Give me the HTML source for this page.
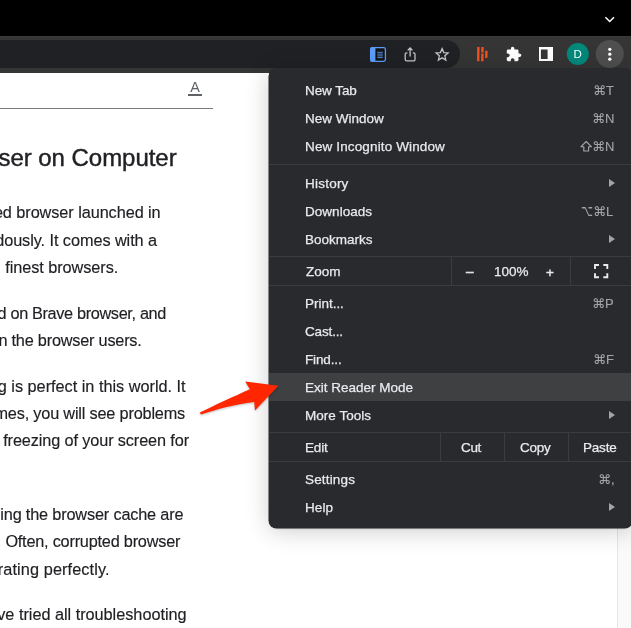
<!DOCTYPE html>
<html><head><meta charset="utf-8">
<style>
html,body{margin:0;padding:0;}
body{width:631px;height:628px;overflow:hidden;background:#fff;position:relative;font-family:"Liberation Sans",sans-serif;}
.abs{position:absolute;}
.mi,.sc,.ln,.h{will-change:transform;}
#top{left:0;top:0;width:631px;height:36px;background:#000;}
#tb{left:0;top:36px;width:631px;height:37px;background:#353535;border-top:1px solid #3a3a3a;box-sizing:border-box;}
#url{left:-30px;top:40px;width:490px;height:28px;border-radius:14px;background:#202124;}
#page{left:0;top:73px;width:631px;height:555px;background:#fff;overflow:hidden;}
#sb{left:617px;top:73px;width:14px;height:555px;background:#fafafa;border-left:1px solid #e6e6e6;box-sizing:border-box;}
.ln{position:absolute;white-space:nowrap;color:#202124;-webkit-text-stroke:0.15px #202124;font-size:16.3px;line-height:20px;text-align:right;left:-100px;}
.h{position:absolute;white-space:nowrap;color:#202124;-webkit-text-stroke:0.4px #202124;font-size:24px;line-height:30px;text-align:right;left:-100px;}
#menu{left:269px;top:68px;width:364px;height:460px;background:#292a2d;border-radius:8px;box-shadow:-0.5px 0.5px 0 0 #292a2d,0 3px 24px rgba(0,0,0,.2),0 1px 2px rgba(0,0,0,.14);color:#e8eaed;font-size:13.5px;}
.mi{position:absolute;left:36px;white-space:nowrap;line-height:16px;-webkit-text-stroke:0.25px #e8eaed;}
.sc{position:absolute;white-space:nowrap;line-height:16px;color:#a2a4a7;-webkit-text-stroke:0.12px #a2a4a7;text-align:right;right:19.5px;font-family:"Liberation Sans","DejaVu Sans",sans-serif;font-size:13px;}
.sep{position:absolute;left:0;width:365px;height:1px;background:#3b3c3f;}
.vsep{position:absolute;width:1px;background:#3b3c3f;}
.tri{position:absolute;left:340px;width:0;height:0;border-left:6px solid #a4a4a4;border-top:4px solid transparent;border-bottom:4px solid transparent;}
#hl{position:absolute;left:0;top:305px;width:365px;height:28px;background:#3f4042;}
</style></head><body>
<div id="page" class="abs"></div>
<div id="sb" class="abs"></div>

<!-- page content -->
<div class="abs" style="left:0;top:108px;width:212.5px;height:1px;background:#7a7a7a;"></div>
<div class="abs" style="left:185px;top:78px;width:20px;font-size:14.4px;line-height:18px;text-align:center;color:#5f6368;will-change:transform;">A</div>
<div class="abs" style="left:187.7px;top:93.6px;width:14px;height:2.1px;background:#5f6368;"></div>

<!--LINES-->
<div class="h" style="top:143px;width:276.6px;letter-spacing:-0.040px;">ser on Computer</div>
<div class="ln" style="top:202px;width:260.6px;letter-spacing:-0.075px;">ed browser launched in</div>
<div class="ln" style="top:230px;width:257.0px;letter-spacing:-0.072px;">dously. It comes with a</div>
<div class="ln" style="top:257px;width:218.2px;letter-spacing:-0.066px;">finest browsers.</div>
<div class="ln" style="top:303px;width:266.0px;letter-spacing:-0.351px;">d on Brave browser, and</div>
<div class="ln" style="top:330px;width:241.6px;letter-spacing:-0.216px;">n the browser users.</div>
<div class="ln" style="top:376px;width:285.6px;letter-spacing:-0.013px;">g is perfect in this world. It</div>
<div class="ln" style="top:403px;width:285.0px;letter-spacing:-0.190px;">mes, you will see problems</div>
<div class="ln" style="top:430px;width:289.0px;letter-spacing:-0.124px;">freezing of your screen for</div>
<div class="ln" style="top:504px;width:283.4px;letter-spacing:-0.170px;">ing the browser cache are</div>
<div class="ln" style="top:531px;width:280.2px;letter-spacing:-0.220px;">Often, corrupted browser</div>
<div class="ln" style="top:559px;width:209.6px;letter-spacing:0.100px;">rating perfectly.</div>
<div class="ln" style="top:604px;width:286.6px;letter-spacing:-0.026px;">ve tried all troubleshooting</div>
<!--/LINES-->

<!-- chrome -->
<div id="top" class="abs"></div>
<div id="tb" class="abs"></div>
<div id="url" class="abs"></div>

<svg class="abs" style="left:0;top:0" width="631" height="80" viewBox="0 0 631 80">
  <!-- chevron -->
  <path d="M605.4 17.2 L609.7 21.5 L614 17.2" fill="none" stroke="#fff" stroke-width="1.5"/>
  <!-- reader icon -->
  <rect x="370.6" y="47.6" width="14.8" height="13.8" rx="1.8" fill="#131416" stroke="#5c9cf8" stroke-width="1.3"/>
  <path d="M370 49.5 a2.5 2.5 0 0 1 2.5 -2.500 H375.4 V62 H372.5 a2.5 2.5 0 0 1 -2.5 -2.500 Z" fill="#5c9cf8"/>
  <path d="M377.300 52.300h5.500M377.300 54.100h5.500M377.300 55.900h5.500M377.300 57.600h5.500" stroke="#5c9cf8" stroke-width="0.850"/>
  <!-- share -->
  <path d="M407.400 52.900H406.600a1.400 1.400 0 0 0 -1.400 1.400V59.500a1.400 1.400 0 0 0 1.400 1.400H413.600a1.400 1.400 0 0 0 1.400 -1.400V54.300a1.400 1.400 0 0 0 -1.400 -1.400H412.800" fill="none" stroke="#c4c7c5" stroke-width="1.300"/>
  <path d="M410.100 56.400V48.200M407.700 50.400L410.100 48L412.500 50.400" fill="none" stroke="#c4c7c5" stroke-width="1.300"/>
  <!-- star -->
  <path d="M442.1 48.6l1.69 4.00 4.34 0.37 -3.29 2.85 0.99 4.24 -3.72 -2.24 -3.72 2.24 0.99 -4.24 -3.29 -2.85 4.34 -0.37z" fill="none" stroke="#c4c7c5" stroke-width="1.3" stroke-linejoin="miter"/>
  <!-- orange ext -->
  <path d="M477.200 47h2.400l-.2 14.300h-2.400zM481.300 47.100h2.400l-.1 5.300h-2.400zM481.200 53.500h2.400l-.1 7.800h-2.400zM485.200 50.800h2.400l-.1 7.200h-2.400z" fill="#f4511e"/>
  <!-- puzzle -->
  <g transform="translate(505.400 46) scale(0.690)"><path d="M20.500 11H19V7c0-1.100-.9-2-2-2h-4V3.500C13 2.120 11.880 1 10.500 1S8 2.120 8 3.500V5H4c-1.100 0-1.990.9-1.990 2v3.800H3.500c1.490 0 2.700 1.210 2.700 2.700s-1.210 2.700-2.700 2.700H2V20c0 1.100.9 2 2 2h3.800v-1.500c0-1.490 1.210-2.700 2.700-2.700 1.490 0 2.700 1.210 2.700 2.700V22H17c1.100 0 2-.9 2-2v-4h1.500c1.380 0 2.500-1.120 2.500-2.500S21.880 11 20.500 11z" fill="#fff"/></g>
  <!-- side panel -->
  <path d="M539 47.100H553V61.100H539Z M540.900 49.500V58.900H547.600V49.500Z" fill="#fff" fill-rule="evenodd"/>
  <!-- avatar -->
  <circle cx="577.800" cy="54" r="11" fill="#00897b"/>
  <!-- menu btn -->
  <circle cx="609.800" cy="54" r="14" fill="#4f4f4f"/>
  <circle cx="609.800" cy="49.300" r="1.650" fill="#fff"/><circle cx="609.800" cy="54.200" r="1.650" fill="#fff"/><circle cx="609.800" cy="59.200" r="1.650" fill="#fff"/>
  <text x="577.700" y="58.400" font-family="Liberation Sans, sans-serif" font-size="11.500" fill="#fff" text-anchor="middle">D</text>
</svg>


<!--MENU-->
<div id="menu" class="abs">
  <div id="hl"></div>
  <div class="mi" style="left:36.0px;top:15px;letter-spacing:-0.077px">New Tab</div>
  <div class="mi" style="left:36.0px;top:43px;letter-spacing:0.006px">New Window</div>
  <div class="mi" style="left:36.0px;top:71px;letter-spacing:0.134px">New Incognito Window</div>
  <div class="mi" style="left:36.0px;top:108px;letter-spacing:0.224px">History</div>
  <div class="mi" style="left:36.0px;top:136px;letter-spacing:0.035px">Downloads</div>
  <div class="mi" style="left:36.0px;top:164px;letter-spacing:0.005px">Bookmarks</div>
  <div class="mi" style="left:37px;top:196px;letter-spacing:-0.033px">Zoom</div>
  <div class="mi" style="left:36.0px;top:228px;letter-spacing:-0.020px">Print...</div>
  <div class="mi" style="left:36px;top:256px;letter-spacing:-0.150px">Cast...</div>
  <div class="mi" style="left:36.0px;top:284px;letter-spacing:-0.142px">Find...</div>
  <div class="mi" style="left:36.0px;top:312px;letter-spacing:-0.010px">Exit Reader Mode</div>
  <div class="mi" style="left:36.0px;top:340px;letter-spacing:0.031px">More Tools</div>
  <div class="mi" style="left:36.0px;top:372px;letter-spacing:-0.190px">Edit</div>
  <div class="mi" style="left:36.0px;top:404px;letter-spacing:0.168px">Settings</div>
  <div class="mi" style="left:36.0px;top:432px;letter-spacing:0.072px">Help</div>
  <div class="mi" style="left:225px;top:196px;letter-spacing:0.033px">100%</div>
  <div class="mi" style="left:191.7px;top:372px;letter-spacing:-0.327px">Cut</div>
  <div class="mi" style="left:250.7px;top:372px;letter-spacing:-0.288px">Copy</div>
  <div class="mi" style="left:314px;top:372px;letter-spacing:-0.200px">Paste</div>
  <div class="mi" style="left:197px;top:196px;-webkit-text-stroke:0.4px #e8eaed">–</div>
  <div class="mi" style="left:276.5px;top:197px;-webkit-text-stroke:0.4px #e8eaed">+</div>

  <div class="sc" style="top:15px">⌘T</div>
  <div class="sc" style="top:43px;right:18.8px">⌘N</div>
  <div class="sc" style="top:71px;right:18.8px">⌘N</div>
  <svg class="abs" style="left:311px;top:72px" width="14" height="12" viewBox="580 140 14 12"><path d="M586.200 141.500 L591.400 146.700 H588.600 V151 H583.800 V146.700 H581 Z" fill="none" stroke="#a2a4a7" stroke-width="1.150" stroke-linejoin="round"/></svg>
  <div class="sc" style="top:136px"><span style="display:inline-block;transform:scale(0.78,1.18);transform-origin:right 60%">⌥</span>⌘L</div>
  <div class="sc" style="top:228px;right:18.9px">⌘P</div>
  <div class="sc" style="top:284px;right:18.9px">⌘F</div>
  <div class="sc" style="top:404px;right:18.5px">⌘,</div>

  <div class="tri" style="top:111px"></div>
  <div class="tri" style="top:167px"></div>
  <div class="tri" style="top:343px"></div>
  <div class="tri" style="top:435px"></div>

  <div class="sep" style="top:96px"></div>
  <div class="sep" style="top:188px"></div>
  <div class="sep" style="top:217px"></div>
  <div class="sep" style="top:364px"></div>
  <div class="sep" style="top:393px"></div>
  <div class="vsep" style="left:182px;top:189px;height:28px"></div>
  <div class="vsep" style="left:301px;top:189px;height:28px"></div>
  <div class="vsep" style="left:171px;top:365px;height:28px"></div>
  <div class="vsep" style="left:235px;top:365px;height:28px"></div>
  <div class="vsep" style="left:299px;top:365px;height:28px"></div>
  <svg class="abs" style="left:325px;top:196px" width="15" height="15" viewBox="0 0 15 15"><path d="M1 5V1H5M9.300 1H13.300V5M13.300 9.300V13.300H9.300M5 13.300H1V9.300" fill="none" stroke="#e8eaed" stroke-width="1.900"/></svg>
</div>
<!--/MENU-->
<!-- arrow -->
<svg class="abs" style="left:190px;top:370px" width="100" height="60" viewBox="190 370 100 60">
  <path style="filter:drop-shadow(0 1px 1px rgba(0,0,0,.25))" d="M199.800 412.600 C215 405 235 396 249.900 389.300 L245.200 381.400 L278.400 385.800 L255 410.400 L254.200 402 C235 404 215 410 201 414.500 Z" fill="#ff2600"/>
</svg>

</body></html>
